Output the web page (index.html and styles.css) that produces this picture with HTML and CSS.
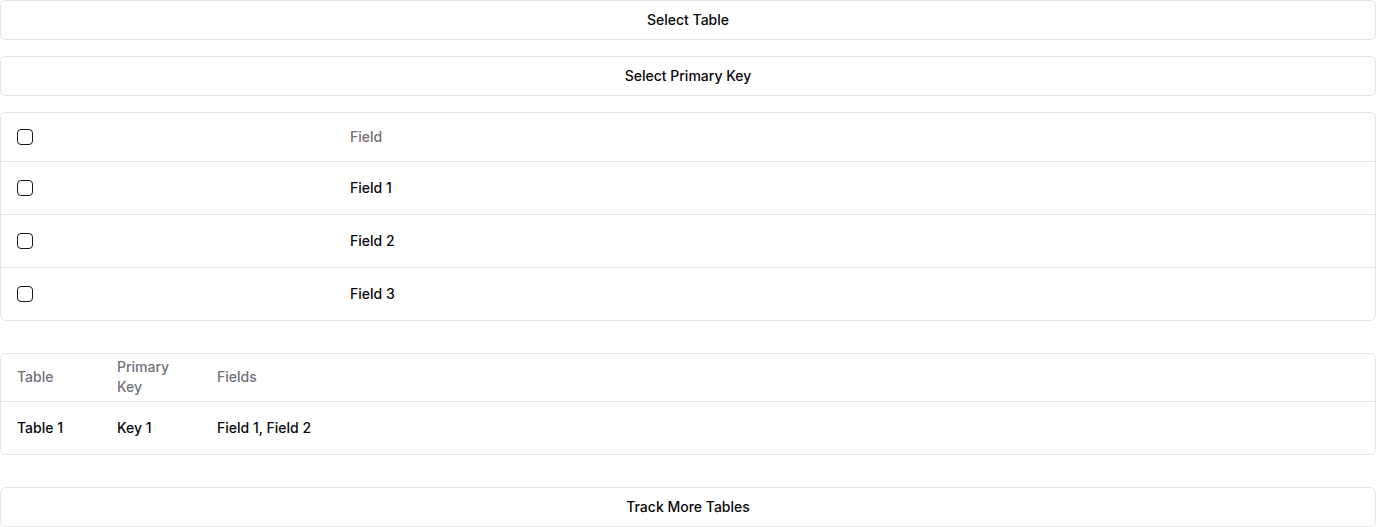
FILE: index.html
```html
<!DOCTYPE html>
<html lang="en">
<head>
<meta charset="utf-8">
<title>Track Tables</title>
<link rel="stylesheet" href="styles.css">
</head>
<body>
<main class="page">
  <div class="top">
    <button class="btn">Select Table</button>
    <button class="btn">Select Primary Key</button>
    <div class="card">
      <table class="tbl fields-tbl">
        <thead>
          <tr>
            <th class="col-check"><span class="check"></span></th>
            <th>Field</th>
          </tr>
        </thead>
        <tbody>
          <tr><td class="col-check"><span class="check"></span></td><td>Field 1</td></tr>
          <tr><td class="col-check"><span class="check"></span></td><td>Field 2</td></tr>
          <tr><td class="col-check"><span class="check"></span></td><td>Field 3</td></tr>
        </tbody>
      </table>
    </div>
  </div>
  <div class="card">
    <table class="tbl summary-tbl">
      <thead>
        <tr>
          <th class="col-narrow">Table</th>
          <th class="col-narrow">Primary Key</th>
          <th>Fields</th>
        </tr>
      </thead>
      <tbody>
        <tr><td>Table 1</td><td>Key 1</td><td>Field 1, Field 2</td></tr>
      </tbody>
    </table>
  </div>
  <button class="btn">Track More Tables</button>
</main>
</body>
</html>
```

FILE: styles.css
```css
* { box-sizing: border-box; }
html, body { margin: 0; padding: 0; background: #ffffff; }
body {
  font-family: Inter, "Noto Sans", "Liberation Sans", sans-serif;
  font-size: 14px;
  line-height: 20px;
  color: #09090b;
}
.page {
  display: flex;
  flex-direction: column;
  gap: 32px;
}
.top {
  display: flex;
  flex-direction: column;
  gap: 16px;
}
.btn {
  display: block;
  width: 100%;
  height: 40px;
  padding: 0 16px;
  border: 1px solid #e4e4e7;
  border-radius: 6px;
  background: #ffffff;
  font-family: inherit;
  font-size: 14px;
  font-weight: 500;
  line-height: 20px;
  color: #09090b;
  text-align: center;
  cursor: pointer;
}
.card {
  border: 1px solid #e4e4e7;
  border-radius: 6px;
  overflow: hidden;
}
.tbl {
  width: 100%;
  border-collapse: collapse;
  table-layout: fixed;
}
.tbl th {
  height: 48px;
  padding: 0 16px;
  text-align: left;
  vertical-align: middle;
  font-weight: 500;
  color: #71717a;
}
.tbl td {
  padding: 16px;
  vertical-align: middle;
  font-weight: 500;
  color: #09090b;
}
.tbl tbody tr { border-top: 1px solid #e4e4e7; }
.fields-tbl .col-check { width: 333px; }
.summary-tbl .col-narrow { width: 100px; }
.check {
  display: block;
  width: 16px;
  height: 16px;
  border: 1px solid #18181b;
  border-radius: 4px;
  background: #ffffff;
}
```
